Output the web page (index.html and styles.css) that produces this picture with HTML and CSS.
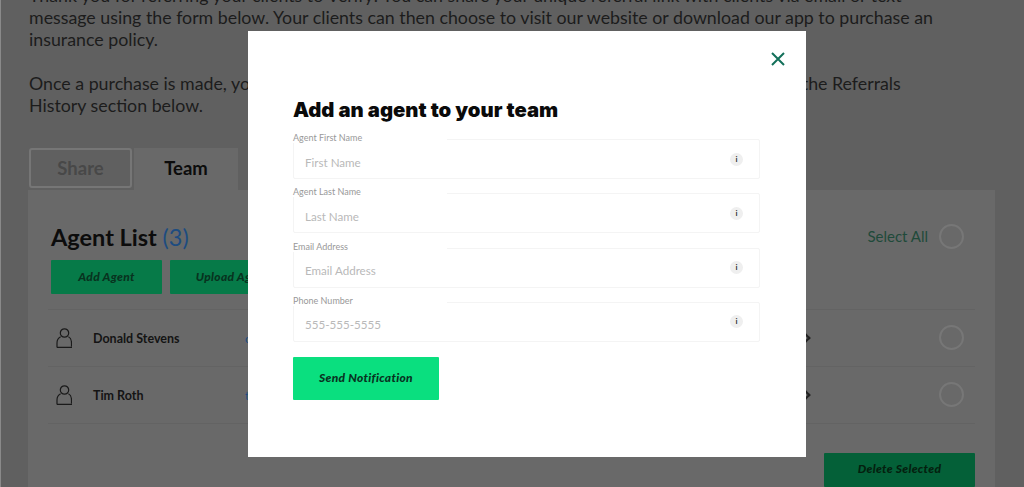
FILE: index.html
```html
<!DOCTYPE html>
<html lang="en">
<head>
    <meta charset="UTF-8">
    <meta name="viewport" content="width=device-width, initial-scale=1.0">
    <title>Add an agent</title>
    <link rel="stylesheet" href="styles.css">
</head>
<body>

    <!-- page behind the modal -->
    <div class="page">
        <p class="intro">Thank you for referring your clients to Verify! You can share your unique referral link with clients via email or text message using the form below. Your clients can then choose to visit our website or download our app to purchase an insurance policy.</p>
        <p class="intro intro-second">Once a purchase is made, you will receive a confirmation email and you can see its current status in the Referrals History section below.</p>

        <div class="tabs">
            <div class="tab tab-share">Share</div>
            <div class="tab tab-team">Team</div>
        </div>

        <div class="card">
            <div class="card-head">
                <h2>Agent List <span class="count">(3)</span></h2>
                <div class="select-all">Select All <span class="radio"></span></div>
            </div>
            <div class="card-actions">
                <button class="dim-button add-button">Add Agent</button>
                <button class="dim-button upload-button">Upload Agents</button>
            </div>
            <div class="agent-list">
                <div class="agent-row">
                    <svg class="person" viewBox="0 0 16 20" width="16" height="20"><circle cx="8.5" cy="5" r="4.2"/><path d="M1 19.4V15c0-3 2-5.4 3.6-6.2M12.400 8.800C14 9.600 15.500 12 15.500 15v3.400M1 19.400h15"/></svg>
                    <span class="agent-name">Donald Stevens</span>
                    <span class="agent-mail">contact@verify.com</span>
                    <span class="chevron"></span>
                    <span class="radio"></span>
                </div>
                <div class="agent-row">
                    <svg class="person" viewBox="0 0 16 20" width="16" height="20"><circle cx="8.5" cy="5" r="4.2"/><path d="M1 19.4V15c0-3 2-5.4 3.6-6.2M12.400 8.800C14 9.600 15.500 12 15.500 15v3.400M1 19.400h15"/></svg>
                    <span class="agent-name">Tim Roth</span>
                    <span class="agent-mail">tim@verify.com</span>
                    <span class="chevron"></span>
                    <span class="radio"></span>
                </div>
            </div>
            <div class="card-foot">
                <button class="dim-button delete-button">Delete Selected</button>
            </div>
        </div>
    </div>

    <!-- modal -->
    <div class="modal">
        <button class="modal-close" aria-label="Close">
            <svg viewBox="0 0 14 14" width="14" height="14"><path d="M1 1l12 12M13 1L1 13"/></svg>
        </button>
        <h1>Add an agent to your team</h1>
        <form class="agent-form">
            <div class="field">
                <label>Agent First Name</label>
                <div class="field-box"><span class="placeholder">First Name</span><span class="info">i</span></div>
            </div>
            <div class="field">
                <label>Agent Last Name</label>
                <div class="field-box"><span class="placeholder">Last Name</span><span class="info">i</span></div>
            </div>
            <div class="field">
                <label>Email Address</label>
                <div class="field-box"><span class="placeholder">Email Address</span><span class="info">i</span></div>
            </div>
            <div class="field">
                <label>Phone Number</label>
                <div class="field-box"><span class="placeholder">555-555-5555</span><span class="info">i</span></div>
            </div>
            <button type="button" class="send-button">Send Notification</button>
        </form>
    </div>

</body>
</html>
```

FILE: styles.css
```css
/* base */
html, body {
    height: 100%;
    overflow: hidden;
}

body {
    box-sizing: border-box;
    margin: 0;
    font-family: Lato, Arial, sans-serif;
    color: #1c1c1c;
    background-color: #606060;
    border-left: 1px solid #8a8a8a;
}

/* page behind the modal */
.page {
    padding-left: 27px;
    width: 967px;
}

.intro {
    margin: -16px 0 0 1px;
    width: 910px;
    font-size: 17.8px;
    line-height: 22px;
}

.intro-second {
    margin-top: 22px;
}

/* tabs */
.tabs {
    display: flex;
    gap: 2px;
    margin-top: 32px;
    margin-left: 1px;
    height: 42px;
}

.tab {
    width: 104px;
    text-align: center;
    font-size: 18.5px;
    font-weight: 700;
    line-height: 40px;
}

.tab-share {
    box-sizing: border-box;
    width: 103px;
    height: 40px;
    line-height: 36px;
    color: #484848;
    border: 2px solid #767676;
    border-radius: 3px;
}

.tab-team {
    background-color: #696969;
    color: #0c0c0c;
}

/* agent card */
.card {
    background-color: #696969;
    padding: 34px 20px 0 23px;
    height: 263px;
}

.card-head {
    display: flex;
    justify-content: space-between;
    align-items: center;
    height: 26px;
    padding-right: 11px;
}

.card-head h2 {
    margin: 0;
    font-size: 23.500px;
    font-weight: 700;
    color: #0c0c0c;
}

.count {
    font-weight: 400;
    color: #1d4c80;
}

.select-all {
    display: flex;
    align-items: center;
    gap: 11px;
    margin-bottom: 2px;
    font-size: 15px;
    color: #1f4a3a;
}

.radio {
    display: block;
    box-sizing: border-box;
    width: 25px;
    height: 25px;
    border: 2px solid #777;
    border-radius: 50%;
}

.card-actions {
    display: flex;
    gap: 8px;
    margin-top: 10px;
}

.dim-button {
    height: 34px;
    padding: 0 0 2px;
    border: none;
    border-radius: 1px;
    background-color: #067a48;
    color: #08331f;
    font-family: Lato, Arial, sans-serif;
    font-size: 12px;
    font-weight: 900;
    font-style: italic;
    letter-spacing: 0.3px;
}

.add-button {
    width: 111px;
}

.upload-button {
    width: 130px;
}

.agent-list {
    margin: 15px 0 0 -3px;
}

.agent-row {
    display: flex;
    align-items: center;
    height: 56px;
    padding-left: 8px;
    border-top: 1px solid #636363;
}

.agent-row:last-child {
    border-bottom: 1px solid #636363;
}

.person {
    fill: none;
    stroke: #1a1a1a;
    stroke-width: 1.2;
}

.agent-name {
    width: 152px;
    margin-left: 21px;
    font-size: 12.500px;
    font-weight: 700;
    color: #141414;
}

.agent-mail {
    width: 556px;
    font-size: 12px;
    color: #1d4c80;
}

.chevron {
    display: block;
    width: 6px;
    height: 6px;
    border-top: 2px solid #222;
    border-right: 2px solid #222;
    transform: rotate(45deg);
}

.agent-row .radio {
    margin: 0 0 1px 130px;
}

.card-foot {
    display: flex;
    justify-content: flex-end;
    margin-top: 29px;
}

.delete-button {
    width: 151px;
    padding-bottom: 4px;
    background-color: #046038;
    color: #04200f;
}

/* modal */
.modal {
    position: fixed;
    top: 31px;
    left: 248px;
    box-sizing: border-box;
    width: 558px;
    height: 426px;
    padding: 67px 46px 0 45px;
    background-color: #fff;
}

.modal h1 {
    margin: 0;
    font-family: Inter, Arial, sans-serif;
    font-size: 20.300px;
    font-weight: 900;
    line-height: 24px;
    color: #0a0a0a;
}

.modal-close {
    position: absolute;
    top: 21px;
    right: 21px;
    padding: 0;
    border: none;
    background: none;
    line-height: 0;
}

.modal-close path {
    fill: none;
    stroke: #13705a;
    stroke-width: 2;
}

.agent-form {
    margin-top: 17px;
}

.field {
    position: relative;
    height: 54.300px;
}

/* the label sits over the top border of the box */
.field label {
    position: absolute;
    top: -7px;
    left: 0;
    width: 154px;
    height: 11px;
    background-color: #fff;
    font-size: 9px;
    line-height: 11px;
    color: #999;
}

.field-box {
    display: flex;
    justify-content: space-between;
    align-items: center;
    box-sizing: border-box;
    height: 40px;
    padding: 6px 16px 0 11px;
    border: 1px solid #f4f4f4;
    border-radius: 2px;
}

.placeholder {
    font-size: 11.600px;
    color: #b9b9b9;
}

.info {
    display: block;
    width: 13px;
    height: 13px;
    margin-top: -6px;
    border-radius: 50%;
    background-color: #efefef;
    font-size: 8px;
    font-weight: 700;
    line-height: 13px;
    text-align: center;
    color: #333;
}

.send-button {
    display: block;
    width: 146px;
    height: 43px;
    margin-top: 1px;
    padding: 0 0 2px;
    border: none;
    border-radius: 1px;
    background-color: #0adf7f;
    color: #08331f;
    font-family: Lato, Arial, sans-serif;
    font-size: 12px;
    font-weight: 900;
    font-style: italic;
    letter-spacing: 0.3px;
}
```
